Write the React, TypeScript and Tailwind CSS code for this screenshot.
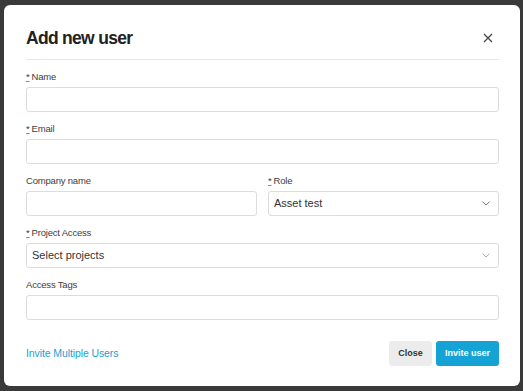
import React from 'react';

function Label({ text, required }: { text: string; required?: boolean }) {
  return (
    <label className="block text-[9.5px] tracking-[-0.02em] leading-[14px] text-[#3d3d3d] mb-[3px]">
      {required && <span className="underline decoration-[#888] mr-[2px]">*</span>}
      {text}
    </label>
  );
}

function Chevron({ light }: { light?: boolean }) {
  return (
    <svg width="8" height="5" viewBox="0 0 8 5" fill="none" className="shrink-0">
      <path d="M0.5 0.7l3.5 3.3 3.5-3.3" stroke={light ? '#a0a0a0' : '#666'} strokeWidth="0.9" />
    </svg>
  );
}

function TextInput() {
  return <div className="h-[25px] rounded-[3px] border border-[#dcdcdc] bg-white" />;
}

function Select({ value, light }: { value: string; light?: boolean }) {
  return (
    <div className="h-[25px] rounded-[3px] border border-[#dcdcdc] bg-white flex items-center justify-between pl-[5px] pr-[8px]">
      <span className="text-[11px] text-[#333]">{value}</span>
      <Chevron light={light} />
    </div>
  );
}

export default function App() {
  return (
    <div className="w-[523px] h-[391px] bg-[#3a3a3a] pt-[5px] pl-[4px]" style={{ fontFamily: '"Liberation Sans", Arial, sans-serif' }}>
      <div className="w-[516px] h-[381px] bg-white rounded-[6px] pl-[22px] pr-[21px] flex flex-col">
        <div className="flex items-center justify-between pt-[20px] pb-[8px] border-b border-[#e6e6e6]">
          <h1 className="text-[17.5px] tracking-[-0.04em] leading-[26px] font-bold text-[#222]">Add new user</h1>
          <svg width="10" height="10" viewBox="0 0 10 10" className="mr-[6px]">
            <path d="M1 1l8 8M9 1l-8 8" stroke="#444" strokeWidth="1.2" />
          </svg>
        </div>

        <div className="flex flex-col gap-[10px] pt-[10px]">
          <div>
            <Label text="Name" required />
            <TextInput />
          </div>
          <div>
            <Label text="Email" required />
            <TextInput />
          </div>
          <div className="grid grid-cols-2 gap-[11px]">
            <div>
              <Label text="Company name" />
              <TextInput />
            </div>
            <div>
              <Label text="Role" required />
              <Select value="Asset test" />
            </div>
          </div>
          <div>
            <Label text="Project Access" required />
            <Select value="Select projects" light />
          </div>
          <div>
            <Label text="Access Tags" />
            <TextInput />
          </div>
        </div>

        <div className="flex items-center justify-between mt-[21px]">
          <a className="text-[10.5px] tracking-[-0.01em] text-[#1a9fd3]">Invite Multiple Users</a>
          <div className="flex gap-[4px]">
            <button className="h-[25px] w-[43px] rounded-[3px] bg-[#ececec] text-[9px] font-bold text-[#333]">Close</button>
            <button className="h-[25px] w-[63px] rounded-[3px] bg-[#14a3d4] text-[9px] font-bold text-white">Invite user</button>
          </div>
        </div>
      </div>
    </div>
  );
}
